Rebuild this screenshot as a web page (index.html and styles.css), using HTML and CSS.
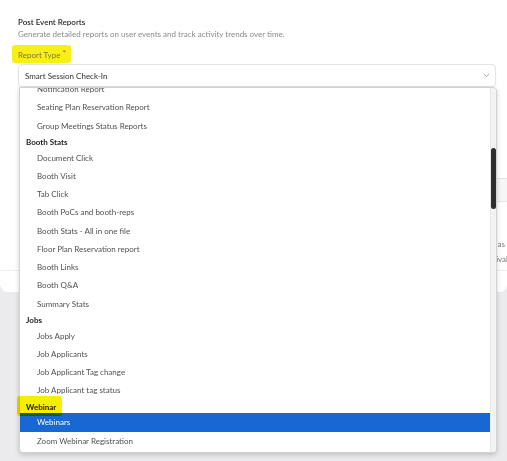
FILE: index.html
```html
<!DOCTYPE html>
<html lang="en">
<head>
    <meta charset="UTF-8">
    <meta name="viewport" content="width=device-width, initial-scale=1.0">
    <title>Post Event Reports</title>
    <link rel="stylesheet" href="styles.css">
</head>
<body>
    <div class="card">
        <p class="title">Post Event Reports</p>
        <p class="subtitle">Generate detailed reports on user events and track activity trends over time.</p>
        <div class="label-row">
            <span class="label">Report Type <span class="req">*</span></span>
        </div>
        <div class="select">
            <span>Smart Session Check-In</span>
            <svg class="chevron" width="7" height="5" viewBox="0 0 7 5"><path d="M0.8 1 L3.5 3.6 L6.2 1" fill="none" stroke="#9a9a9a" stroke-width="0.9"/></svg>
        </div>

        <!-- content hidden under the open list -->
        <div class="table-head"></div>
        <div class="note-line"><span>Attendee has</span></div>
        <div class="note-line second"><span>Arrival</span></div>
        <div class="divider"></div>
    </div>

    <!-- open dropdown -->
    <div class="dropdown">
        <div class="options">
            <div class="list">
                <div class="opt">Notification Report</div>
                <div class="opt">Seating Plan Reservation Report</div>
                <div class="opt">Group Meetings Status Reports</div>
                <div class="group">Booth Stats</div>
                <div class="opt">Document Click</div>
                <div class="opt">Booth Visit</div>
                <div class="opt">Tab Click</div>
                <div class="opt">Booth PoCs and booth-reps</div>
                <div class="opt">Booth Stats - All in one file</div>
                <div class="opt">Floor Plan Reservation report</div>
                <div class="opt">Booth Links</div>
                <div class="opt">Booth Q&amp;A</div>
                <div class="opt">Summary Stats</div>
                <div class="group">Jobs</div>
                <div class="opt">Jobs Apply</div>
                <div class="opt">Job Applicants</div>
                <div class="opt">Job Applicant Tag change</div>
                <div class="opt">Job Applicant tag status</div>
                <div class="group">Webinar</div>
                <div class="opt selected">Webinars</div>
                <div class="opt">Zoom Webinar Registration</div>
            </div>
        </div>
        <div class="scrollbar">
            <div class="thumb"></div>
        </div>
    </div>

    <div class="marker"></div>
</body>
</html>
```

FILE: styles.css
```css
body {
    margin: 0;
    background-color: #ebebed;
    font-family: Lato, "Liberation Sans", sans-serif;
    font-size: 8px;
    color: #333;
    position: relative;
    height: 461px;
    overflow: hidden;
}

.card {
    background-color: #fff;
    height: 292px;
    box-sizing: border-box;
    padding: 16px 11px 0 18px;
    border-radius: 0 0 8px 8px;
    overflow: hidden;
}

.title {
    margin: 0;
    line-height: 12px;
    font-weight: 600;
    color: #2b2b2b;
}

.subtitle {
    margin: 0;
    line-height: 12px;
    color: #8a8a8a;
}

.label-row {
    margin-top: 5px;
    height: 18px;
}

.label {
    display: inline-block;
    height: 18px;
    line-height: 20px;
    padding: 0 5px 0 6px;
    margin-left: -6px;
    border-radius: 3px;
    background-color: #f8ef1a;
    color: #7f7a2c;
}

.req {
    color: #e2372b;
    position: relative;
    top: -2px;
}

.select {
    margin-top: 1px;
    height: 23px;
    box-sizing: border-box;
    border: 1px solid #e4e4e4;
    border-radius: 4px;
    box-shadow: 0 1px 2px rgba(0, 0, 0, 0.05);
    display: flex;
    align-items: center;
    justify-content: space-between;
    padding: 0 5px 0 6px;
    color: #333;
}

.table-head {
    margin: 91px -11px 0 200px;
    height: 22px;
    background-color: #f6f6f7;
    border-top: 1px solid #e6e6e6;
    border-bottom: 1px solid #e6e6e6;
}

.note-line {
    margin-right: -11px;
    text-align: right;
    white-space: nowrap;
    line-height: 14px;
    margin-top: 35px;
    color: #777;
    padding-right: 2px;
}

.note-line.second {
    margin-top: 1px;
    margin-right: -14px;
}

.divider {
    margin: 4px -11px 0 -18px;
    border-top: 1px solid #eeeeee;
}

.dropdown {
    position: absolute;
    left: 19px;
    top: 87px;
    width: 478px;
    height: 366px;
    box-sizing: border-box;
    background-color: #fff;
    border: 1px solid #d2d2d2;
    border-radius: 0 4px 4px 4px;
    box-shadow: 0 2px 5px rgba(0, 0, 0, 0.18);
    display: flex;
    overflow: hidden;
}

.options {
    flex: 1;
    overflow: hidden;
}

.list {
    margin-top: -8px;
}

.opt {
    height: 18.25px;
    line-height: 18.25px;
    padding-left: 17px;
    color: #505050;
    white-space: nowrap;
}

.opt.selected {
    background-color: #1967d2;
    color: #fff;
}

.group {
    height: 13.75px;
    line-height: 15px;
    padding-left: 6px;
    font-weight: bold;
    color: #222;
}

.scrollbar {
    width: 5px;
    background-color: #f3f3f3;
    border-left: 1px solid #e8e8e8;
}

.thumb {
    margin-top: 60px;
    height: 61px;
    background-color: #2e2e2e;
    border-radius: 3px;
}

.marker {
    position: absolute;
    left: 17px;
    top: 396px;
    width: 45px;
    height: 20px;
    border-radius: 3px;
    background-color: #f6ee00;
    mix-blend-mode: multiply;
}
```
